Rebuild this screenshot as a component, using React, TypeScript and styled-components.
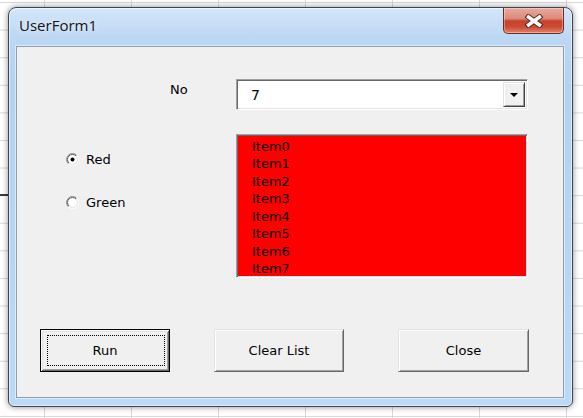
import React, { useId } from 'react';
import styled, { createGlobalStyle } from 'styled-components';

const GlobalStyle = createGlobalStyle`
  html, body {
    margin: 0;
    padding: 0;
    background: #fff;
  }
  * {
    box-sizing: border-box;
  }
`;

const Desktop = styled.div`
  width: 583px;
  height: 418px;
  padding: 7px 0 0 8px;
  overflow: hidden;
  background-color: #fff;
  background-image:
    linear-gradient(#3a3a3a, #3a3a3a),
    linear-gradient(to right, #d8d8d8 1px, transparent 1px),
    linear-gradient(to bottom, #d8d8d8 1px, transparent 1px);
  background-size: 8px 2px, 87px 100%, 100% 27.6px;
  background-position: 0 194px, 44px 0, 0 2px;
  background-repeat: no-repeat, repeat, repeat;
`;

const Window = styled.div`
  width: 565px;
  height: 400px;
  display: flex;
  flex-direction: column;
  padding: 0 8px 8px 7px;
  border: 1px solid #3b4652;
  border-radius: 8px 8px 6px 6px;
  background: linear-gradient(to bottom, #d4e6f9 0px, #bcd7f3 30px, #b3d1f1 80px, #bcd9f6 100%);
  box-shadow: 0 0 6px rgba(0, 0, 0, 0.45), inset 0 0 0 1px rgba(255, 255, 255, 0.55);
`;

const TitleBar = styled.div`
  height: 38px;
  display: flex;
  align-items: flex-start;
`;

const Title = styled.span`
  padding: 7px 0 0 3px;
  font-family: 'Open Sans', 'Liberation Sans', sans-serif;
  font-size: 15px;
  line-height: 20px;
  color: #141414;
  text-shadow: 0 0 6px rgba(255, 255, 255, 0.9);
`;

const CloseButton = styled.div`
  margin-left: auto;
  width: 61px;
  height: 26px;
  display: flex;
  align-items: center;
  justify-content: center;
  border: 1px solid #6e2c21;
  border-top: none;
  border-radius: 0 0 5px 5px;
  background: linear-gradient(
    to bottom,
    #e8aa9d 0%,
    #dd8a7a 42%,
    #c7412b 52%,
    #cc4a33 75%,
    #e2836a 100%
  );
  box-shadow: inset 0 0 0 1px rgba(255, 255, 255, 0.35);
`;

const Client = styled.div`
  flex: 1;
  display: flex;
  flex-direction: column;
  padding: 32px 0 0 23px;
  background: #f0f0f0;
  border: 1px solid #8f9caa;
  box-shadow: 0 0 0 1px rgba(255, 255, 255, 0.5);
  font-family: 'DejaVu Sans', Verdana, sans-serif;
  font-size: 13px;
  color: #000;
`;

const FormGrid = styled.div`
  display: grid;
  grid-template-columns: 196px 292px;
  row-gap: 24px;
`;

const FieldLabel = styled.div`
  padding: 3px 0 0 130px;
  line-height: 15px;
`;

const Sunken = styled.div`
  border: 1px solid;
  border-color: #a0a0a0 #fff #fff #a0a0a0;
  box-shadow: inset 1px 1px 0 #696969, inset -1px -1px 0 #e3e3e3;
`;

const Combo = styled(Sunken)`
  height: 31px;
  display: flex;
  align-items: stretch;
  background: #fff;
  padding: 2px;
`;

const ComboValue = styled.div`
  flex: 1;
  display: flex;
  align-items: center;
  padding-left: 12px;
  font-size: 14px;
`;

const DropButton = styled.div`
  width: 22px;
  display: flex;
  align-items: center;
  justify-content: center;
  background: #f0f0f0;
  border: 1px solid;
  border-color: #e3e3e3 #404040 #404040 #e3e3e3;
  box-shadow: inset 1px 1px 0 #fff, inset -1px -1px 0 #a0a0a0;
`;

const Arrow = styled.div`
  width: 0;
  height: 0;
  border-left: 4px solid transparent;
  border-right: 4px solid transparent;
  border-top: 4px solid #000;
  margin-top: 1px;
`;

const RadioGroup = styled.div`
  display: flex;
  flex-direction: column;
  gap: 25px;
  padding: 16px 0 0 26px;
`;

const RadioRow = styled.label`
  display: flex;
  align-items: center;
  gap: 7px;
  height: 18px;
`;

const ListBox = styled(Sunken)`
  height: 144px;
  background: #ff0000;
  padding: 3px 0 0 15px;
  overflow: hidden;
`;

const ListItem = styled.div`
  line-height: 17.45px;
  height: 17.45px;
`;

const ButtonRow = styled.div`
  display: flex;
  margin-top: 51px;
`;

const Button = styled.div<{ $default?: boolean; $width?: number; $gap?: number }>`
  position: relative;
  width: ${(p) => p.$width ?? 130}px;
  height: 43px;
  margin-left: ${(p) => p.$gap ?? 0}px;
  display: flex;
  align-items: center;
  justify-content: center;
  background: #f0f0f0;
  border: 1px solid;
  border-color: ${(p) => (p.$default ? '#000' : '#e3e3e3 #696969 #696969 #e3e3e3')};
  box-shadow: ${(p) =>
    p.$default
      ? 'inset 1px 1px 0 #fff, inset -1px -1px 0 #696969, inset 2px 2px 0 #e3e3e3, inset -2px -2px 0 #a0a0a0'
      : 'inset 1px 1px 0 #fff, inset -1px -1px 0 #a0a0a0'};

  ${(p) =>
    p.$default &&
    `
    &::after {
      content: '';
      position: absolute;
      inset: 5px 4px 5px 6px;
      border: 1px dotted #000;
    }
  `}
`;

const Radio: React.FC<{ checked?: boolean }> = ({ checked }) => {
  const id = useId().replace(/:/g, '');
  return (
    <svg width="13" height="13" viewBox="0 0 13 13">
      <defs>
        <linearGradient id={`o${id}`} x1="0" y1="0" x2="1" y2="1">
          <stop offset="0.45" stopColor="#8c8c8c" />
          <stop offset="0.55" stopColor="#ffffff" />
        </linearGradient>
        <linearGradient id={`i${id}`} x1="0" y1="0" x2="1" y2="1">
          <stop offset="0.45" stopColor="#5a5a5a" />
          <stop offset="0.55" stopColor="#e3e3e3" />
        </linearGradient>
      </defs>
      <circle cx="6.5" cy="6.5" r="6" fill="none" stroke={`url(#o${id})`} strokeWidth="1" />
      <circle cx="6.5" cy="6.5" r="5" fill="#fff" stroke={`url(#i${id})`} strokeWidth="1" />
      {checked && <circle cx="6.5" cy="6.5" r="2" fill="#000" />}
    </svg>
  );
};

const items = Array.from(Array(8).keys()).map((i) => `Item${i}`);

const App: React.FC = () => {
  return (
    <>
      <GlobalStyle />
      <Desktop>
        <Window>
          <TitleBar>
            <Title>UserForm1</Title>
            <CloseButton>
              <svg width="20" height="14" viewBox="0 0 20 14">
                <path d="M4.5 3 L15.5 11 M15.5 3 L4.5 11" stroke="#4a2a26" strokeWidth="5.5" strokeLinecap="square" />
                <path d="M4.5 3 L15.5 11 M15.5 3 L4.5 11" stroke="#fff" strokeWidth="3.5" strokeLinecap="square" />
              </svg>
            </CloseButton>
          </TitleBar>
          <Client>
            <FormGrid>
              <FieldLabel>No</FieldLabel>
              <Combo>
                <ComboValue>7</ComboValue>
                <DropButton>
                  <Arrow />
                </DropButton>
              </Combo>
              <RadioGroup>
                <RadioRow>
                  <Radio checked />
                  Red
                </RadioRow>
                <RadioRow>
                  <Radio />
                  Green
                </RadioRow>
              </RadioGroup>
              <ListBox>
                {items.map((item) => (
                  <ListItem key={item}>{item}</ListItem>
                ))}
              </ListBox>
            </FormGrid>
            <ButtonRow>
              <Button $default>Run</Button>
              <Button $gap={44}>Clear List</Button>
              <Button $gap={54} $width={131}>Close</Button>
            </ButtonRow>
          </Client>
        </Window>
      </Desktop>
    </>
  );
};

export default App;
